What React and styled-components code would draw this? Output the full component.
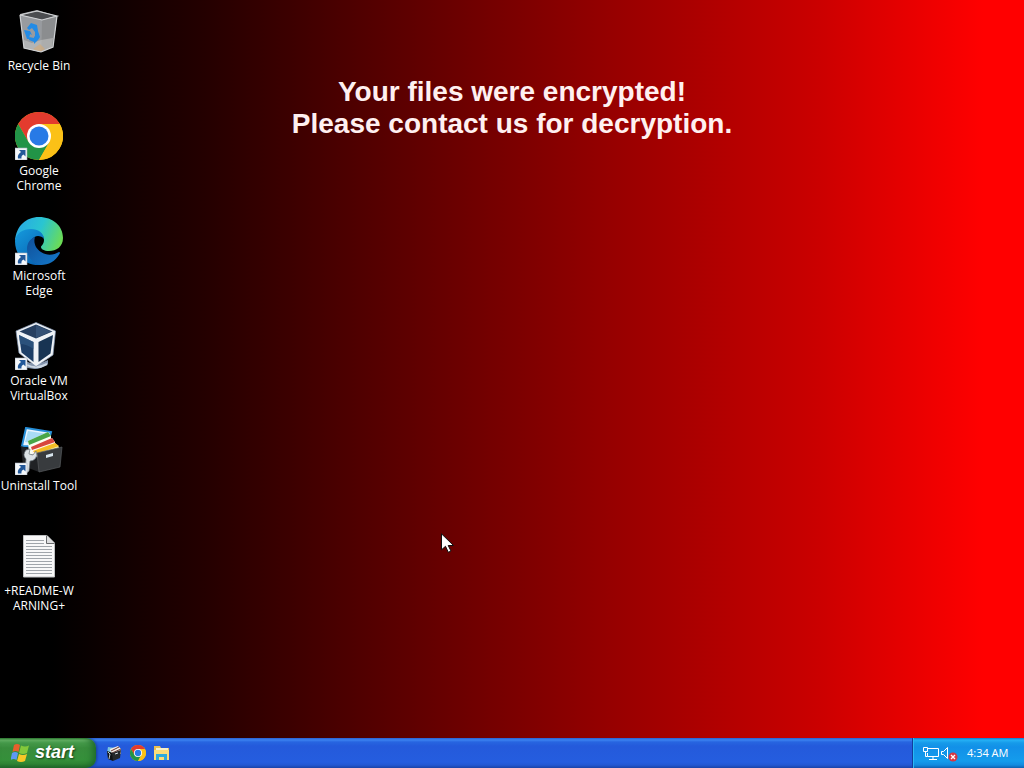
import React from 'react';
import styled, { createGlobalStyle } from 'styled-components';

const GlobalStyle = createGlobalStyle`
  * { box-sizing: border-box; }
  body { margin: 0; background: #000; }
`;

const Screen = styled.div`
  display: flex;
  flex-direction: column;
  min-height: 100vh;
  overflow: hidden;
  font-family: 'Open Sans', 'Liberation Sans', sans-serif;
`;

const Desktop = styled.main`
  position: relative;
  flex: 1;
  display: flex;
  background: linear-gradient(90deg, #000 5%, #240000 20%, #5e0000 40%, #970000 60%, #cb0000 80%, #ff0000 96%);
`;

const IconColumn = styled.nav`
  display: flex;
  flex-direction: column;
  flex: none;
  width: 78px;
`;

const Shortcut = styled.button`
  display: flex;
  flex-direction: column;
  align-items: center;
  gap: 3px;
  height: 105px;
  padding: 7px 0 0;
  border: 0;
  background: none;
  color: #fff;
  font: 12px/15px 'Open Sans', 'Liberation Sans', sans-serif;
  text-align: center;
  text-shadow: 1px 1px 1px #000;
`;

const ShortcutLabel = styled.span`
  white-space: pre;
`;

const Headline = styled.h1`
  position: absolute;
  top: 76px;
  left: 0;
  right: 0;
  margin: 0;
  color: #fff0f0;
  font: bold 28px/32px 'Liberation Sans', Arial, sans-serif;
  text-align: center;
`;

const Pointer = styled.svg`
  position: absolute;
  left: 441px;
  top: 533px;
`;

const Taskbar = styled.footer`
  display: flex;
  flex: none;
  height: 30px;
  background: linear-gradient(#2b5fd0 0, #3b82f0 2px, #2765e0 4px, #245adb 8px, #255ddf 24px, #2358d3 27px, #1a43a8 30px);
`;

const StartButton = styled.button`
  display: flex;
  align-items: center;
  gap: 5px;
  width: 96px;
  padding: 0 0 2px 11px;
  border: 0;
  border-radius: 0 10px 10px 0;
  background: linear-gradient(#2f7a31 0, #68b568 2px, #45994a 5px, #388c3c 10px, #35903a 22px, #2f8434 26px, #20652a 30px);
  box-shadow: inset -5px 0 7px -2px #1d6829, 1px 0 3px #17408f;
  color: #fff;
  font: italic bold 18px/22px 'Liberation Sans', Arial, sans-serif;
  text-shadow: 1px 1px 2px #173d18;
`;

const QuickLaunch = styled.div`
  display: flex;
  align-items: center;
  flex: 1;
  gap: 7px;
  padding-left: 10px;
`;

const LaunchButton = styled.button`
  display: flex;
  padding: 0;
  border: 0;
  background: none;
`;

const Tray = styled.div`
  display: flex;
  align-items: center;
  gap: 9px;
  width: 112px;
  padding-left: 10px;
  border-left: 1px solid #123e9c;
  background: linear-gradient(#1377c9 0, #25b0f5 2px, #169ae9 5px, #1290e8 9px, #149cec 23px, #128be0 27px, #0d61b0 30px);
  box-shadow: inset 1px 0 #29baf5;
  color: #fff;
  font: 11px/14px 'Open Sans', 'Liberation Sans', sans-serif;
`;

const Clock = styled.time`
  white-space: nowrap;
`;

function ShortcutArrow() {
  return (
    <g>
      <path d="M0 36h12v12H0z" fill="#f4f7fa" stroke="#aab4bf" strokeWidth=".6" />
      <path d="M4 38h6.500v6.500L8.500 42.500Q6 43.500 6.500 46.500H3Q2 42.600 6 40z" fill="#225899" />
    </g>
  );
}

function BinIcon() {
  return (
    <svg width="48" height="48" viewBox="0 0 48 48" aria-hidden="true">
      <path d="M5 7L22 3l20 6-4 31-13 5-16-4z" fill="#a3a5a8" />
      <path d="M6 8L22 4l18 5-13 4z" fill="#4b4d50" />
      <path d="M5 8l22 5-1 32-17-4z" fill="#989b9f" />
      <path d="M27 13l15-4-4 31-12 5z" fill="#8b8d8f" />
      <path d="M9 33l8 3 9-3 12-2-1 9-11 5-17-4z" fill="#c8c9c7" opacity=".55" />
      <path d="M18 42l7-5 5 5-5 3z" fill="#d3aa79" opacity=".65" />
      <path d="M5 8L22 4l20 5-15 4zM5 8l4 33 17 4M42 9l-4 31-12 5" fill="none" stroke="#d0d2d4" strokeWidth="1.200" />
      <path d="M12 21l4-5 6 2 1 6-3 1-3-4-3 2zM9 23l6 1 2 4-2-1-1 5h-2zM14 30l5 1v-2l4 4-4 4v-2l-5-2zM20 25l3-1 2 6-2 3-3-3z" fill="#228be6" />
    </svg>
  );
}

function ChromeDrawing() {
  return (
    <g>
      <circle cx="24" cy="24" r="24" fill="#fbc117" />
      <path d="M3.200 12A24 24 0 0 1 44.800 12H24L13.600 30z" fill="#e33b2e" />
      <path d="M3.200 12A24 24 0 0 0 24 48l10.400-18H13.600z" fill="#229447" />
      <path d="M24 12h20.800A24 24 0 0 1 24 48l10.400-18z" fill="#fbc117" />
      <circle cx="24" cy="24" r="12" fill="#fff" />
      <circle cx="24" cy="24" r="9.500" fill="#287ae6" />
    </g>
  );
}

function ChromeIcon() {
  return <svg width="48" height="48" viewBox="0 0 48 48" aria-hidden="true"><ChromeDrawing /><ShortcutArrow /></svg>;
}

function EdgeIcon() {
  return (
    <svg width="48" height="48" viewBox="0 0 48 48" aria-hidden="true">
      <defs>
        <linearGradient id="edge-top" x1="0" y1=".3" x2="1" y2=".6"><stop stopColor="#28a9e4" /><stop offset=".5" stopColor="#2ac5d1" /><stop offset="1" stopColor="#6cdc55" /></linearGradient>
        <linearGradient id="edge-left" x1="0" y1="0" x2=".7" y2="1"><stop stopColor="#159bdd" /><stop offset="1" stopColor="#0864b4" /></linearGradient>
        <linearGradient id="edge-bottom" x1="0" y1="0" x2="1" y2="1"><stop stopColor="#104f99" /><stop offset="1" stopColor="#147acb" /></linearGradient>
      </defs>
      <path d="M0 24C1 9 11 0 24 0c14 0 24 9 24 21 0 9-7 13-14 13-5 0-8-2-8-4 0-1 3-3 3-7 0-6-6-10-13-10C9 13 4 16 0 24z" fill="url(#edge-top)" />
      <path d="M0 24C1 16 8 12 16 12c7 0 13 4 13 10-1-2-4-3-6-3-5 0-9 6-9 12 0 8 6 15 14 17C11 50 0 39 0 24z" fill="url(#edge-left)" />
      <path d="M20 20c-2 6 1 12 6 15 6 4 13 3 18 0 1 0 1 1 1 1-4 8-11 12-19 12-8-1-14-8-14-16 0-6 3-10 8-12z" fill="url(#edge-bottom)" />
      <ShortcutArrow />
    </svg>
  );
}

function BoxIcon() {
  return (
    <svg width="48" height="48" viewBox="0 0 48 48" aria-hidden="true">
      <path d="M8 38q13 7 25 0v4q-12 9-25 2z" fill="#8495ae" />
      <path d="M12 43q9 5 20-1" fill="none" stroke="#c9d5e2" strokeWidth="2" />
      <path d="M1 9L21 .5 40.500 9 38 33 21 44.500 4 31z" fill="#eff3f7" stroke="#8497b2" strokeWidth=".7" />
      <path d="M4.500 9.500L21 2.500l16.500 7L21 16.500z" fill="#263f60" />
      <path d="M21 3l15 6.500L21 16z" fill="#345175" />
      <path d="M4 13l14.500 7v20L6.500 30.500z" fill="#1d3f67" />
      <path d="M23.500 20L38 13l-2.500 18.500L23.500 40z" fill="#183453" />
      <path d="M4 13l14.500 7v7q-7-5-13.500-5z" fill="#315a84" opacity=".7" />
      <ShortcutArrow />
    </svg>
  );
}

function ToolDrawing() {
  return (
    <g>
      <path d="M11 1l25 4-4 15-25-1z" fill="#eaf5ff" stroke="#258ed8" strokeWidth="2" />
      <path d="M13 4l20 3-3 11-20-3z" fill="#a9dcf6" />
      <path d="M6 19l18 6v20L8 39z" fill="#202225" />
      <path d="M13 14l20-9 3 4v16l-22 3z" fill="#fafff2" />
      <path d="M13 14l20-9 3 4-22 9z" fill="#49a646" />
      <path d="M16 20l21-9 3 4v12l-22 3z" fill="#fff4ed" />
      <path d="M16 20l21-9 3 4-23 8z" fill="#d8453d" />
      <path d="M18 24l22-8 4 4v8l-20 4z" fill="#fff3ad" />
      <path d="M18 24l22-8 4 3-23 8z" fill="#f5bd25" />
      <path d="M22 26l25-6-2 20-21 5z" fill="#383b3e" stroke="#595c5f" strokeWidth=".7" />
      <path d="M31 28l7-2v3l-7 2z" fill="#d6e3ec" />
      <path d="M11 23l4-1-1 5 4 1 3-4q2 5-1 8-2 2-5 2l-1 10q-2 3-4 0l1-12q-4-4 0-9z" fill="#dce2e5" stroke="#687178" strokeWidth=".7" />
    </g>
  );
}

function ToolIcon() {
  return <svg width="48" height="48" viewBox="0 0 48 48" aria-hidden="true"><ToolDrawing /><ShortcutArrow /></svg>;
}

function SmallToolIcon() {
  return (
    <svg width="17" height="16" viewBox="0 0 17 16" aria-hidden="true">
      <path d="M2 2l8 1v5H1z" fill="#7cc5df" />
      <path d="M4 4l8-3 3 3v5H5z" fill="#f3eee5" />
      <path d="M5 6l8-4M6 8l9-4" stroke="#6a3632" />
      <path d="M1 6l6 2v8l-5-2z" fill="#111315" />
      <path d="M6 8l9-3-1 8-7 3z" fill="#25282a" />
      <path d="M2 7l2 2-1 5" fill="none" stroke="#bfc7ca" />
      <path d="M9 9l3-1" stroke="#d7dfe3" />
    </svg>
  );
}

function DocumentIcon() {
  return (
    <svg width="48" height="48" viewBox="0 0 48 48" aria-hidden="true">
      <path d="M8.500 3.500H32l7.500 7.500v34h-31z" fill="#f8f8f8" stroke="#bec0c2" />
      <path d="M31.500 3.500v8h8" fill="#dedfe0" stroke="#686a6c" />
      <path d="M11 8.500h18M11 11.500h18M11 14.500h26M11 17.500h26M11 20.500h26M11 23.500h26M11 26.500h26M11 29.500h26M11 32.500h26M11 35.500h26M11 38.500h26M11 41.500h26" stroke="#a0a5aa" />
    </svg>
  );
}

function WindowsFlag() {
  return (
    <svg width="19" height="19" viewBox="0 0 19 19" aria-hidden="true">
      <path d="M3 2q3-2 6 0L7.500 9q-3-2-6 0z" fill="#e85f2c" />
      <path d="M10 2.500q4 2 8 0L16 10q-4 2-8 0z" fill="#83c83b" />
      <path d="M1 10q3-2 6 0l-1.500 7q-3-2-6 0z" fill="#5e99f3" />
      <path d="M8 11q4 2 8 0l-2 7q-4 2-8 0z" fill="#f8c727" />
    </svg>
  );
}

function FolderIcon() {
  return (
    <svg width="17" height="16" viewBox="0 0 17 16" aria-hidden="true">
      <path d="M1 1h6l1 2h8v12H1z" fill="#e9be52" />
      <path d="M3 3h12v5H3z" fill="#f7f0ca" />
      <path d="M1 5h15v10H1z" fill="#fbdc79" />
      <path d="M3 9h11v6h-3v-3H6v3H3z" fill="#2eaadd" />
    </svg>
  );
}

function StatusIcons() {
  return (
    <svg width="35" height="17" viewBox="0 0 35 17" aria-hidden="true">
      <g fill="none" stroke="#fff">
        <path d="M5 3.500h10.500v8H4.500V8M10 11.500v3M6 14.500h8M.5 2.500h4v4h-4zM2.500 6.500v5h2" />
        <path d="M18.500 6.500h2l4-4v11l-4-4h-2z" />
      </g>
      <circle cx="30" cy="12" r="4.500" fill="#d63743" />
      <path d="M28 10l4 4m0-4l-4 4" stroke="#fff" strokeWidth="1.300" />
    </svg>
  );
}

const shortcuts = [
  { label: 'Recycle Bin', icon: <BinIcon /> },
  { label: 'Google\nChrome', icon: <ChromeIcon /> },
  { label: 'Microsoft\nEdge', icon: <EdgeIcon /> },
  { label: 'Oracle VM\nVirtualBox', icon: <BoxIcon /> },
  { label: 'Uninstall Tool', icon: <ToolIcon /> },
  { label: '+README-W\nARNING+', icon: <DocumentIcon /> },
];

export default function App() {
  return (
    <Screen>
      <GlobalStyle />
      <Desktop>
        <IconColumn aria-label="Desktop">
          {shortcuts.map(({ label, icon }) => (
            <Shortcut key={label} type="button">{icon}<ShortcutLabel>{label}</ShortcutLabel></Shortcut>
          ))}
        </IconColumn>
        <Headline>Your files were encrypted!<br />Please contact us for decryption.</Headline>
        <Pointer width="14" height="21" viewBox="0 0 14 21" aria-hidden="true">
          <path d="M.5.800v16l4-3.500 2.800 6 2.700-1.300-2.800-5.500h5.300z" fill="#fff" stroke="#111" />
        </Pointer>
      </Desktop>
      <Taskbar>
        <StartButton type="button"><WindowsFlag />start</StartButton>
        <QuickLaunch>
          <LaunchButton type="button" aria-label="Uninstall Tool"><SmallToolIcon /></LaunchButton>
          <LaunchButton type="button" aria-label="Google Chrome"><svg width="16" height="16" viewBox="0 0 48 48" aria-hidden="true"><ChromeDrawing /></svg></LaunchButton>
          <LaunchButton type="button" aria-label="File Explorer"><FolderIcon /></LaunchButton>
        </QuickLaunch>
        <Tray><StatusIcons /><Clock dateTime="04:34">4:34 AM</Clock></Tray>
      </Taskbar>
    </Screen>
  );
}
